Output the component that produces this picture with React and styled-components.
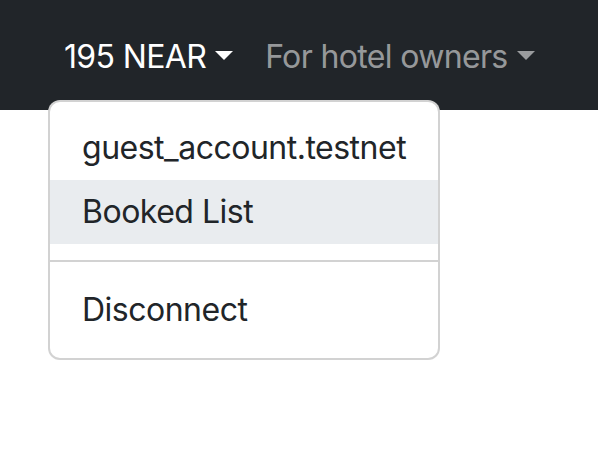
import React from "react";
import styled, { createGlobalStyle } from "styled-components";

const Global = createGlobalStyle`
  html, body { margin: 0; padding: 0; background: #fff; }
  body { font-family: Inter, "Noto Sans", "Liberation Sans", sans-serif; }
`;

const Page = styled.div`
  min-height: 460px;
  background: #fff;
`;

const Navbar = styled.nav`
  height: 110px;
  background: #212529;
  display: flex;
  align-items: flex-start;
  padding: 17px 48px 0;
  box-sizing: border-box;
`;

const NavList = styled.ul`
  list-style: none;
  margin: 0;
  padding: 0;
  display: flex;
`;

const NavItem = styled.li`
  position: relative;
`;

const NavLink = styled.a`
  display: block;
  padding: 16px 16px;
  font-size: 32px;
  line-height: 48px;
  color: ${(p) => (p.$active ? "#ffffff" : "rgba(255,255,255,0.55)")};
  text-decoration: none;
  white-space: nowrap;
  letter-spacing: -0.65px;
  &::after {
    content: "";
    display: inline-block;
    margin-left: 9px;
    vertical-align: 8px;
    border-top: 9.6px solid;
    border-left: 9.6px solid transparent;
    border-right: 9.6px solid transparent;
    border-bottom: 0;
  }
`;

const Menu = styled.ul`
  position: absolute;
  top: 83px;
  left: 0;
  margin: 0;
  padding: 14px 0 16px;
  list-style: none;
  background: #fff;
  border: 2px solid rgba(0, 0, 0, 0.175);
  border-radius: 12px;
  z-index: 2;
`;

const MenuItem = styled.li`
  padding: 8px 32px;
  font-size: 32px;
  line-height: 48px;
  color: #212529;
  white-space: nowrap;
  letter-spacing: -0.5px;
  background: ${(p) => (p.$hover ? "#e9ecef" : "transparent")};
`;

const Divider = styled.li`
  height: 0;
  margin: 16px 0;
  border-top: 2px solid rgba(0, 0, 0, 0.175);
`;

export default function App() {
  return (
    <Page>
      <Global />
      <Navbar>
        <NavList>
          <NavItem>
            <NavLink $active>195 NEAR</NavLink>
            <Menu>
              <MenuItem>guest_account.testnet</MenuItem>
              <MenuItem $hover>Booked List</MenuItem>
              <Divider />
              <MenuItem>Disconnect</MenuItem>
            </Menu>
          </NavItem>
          <NavItem>
            <NavLink>For hotel owners</NavLink>
          </NavItem>
        </NavList>
      </Navbar>
    </Page>
  );
}
